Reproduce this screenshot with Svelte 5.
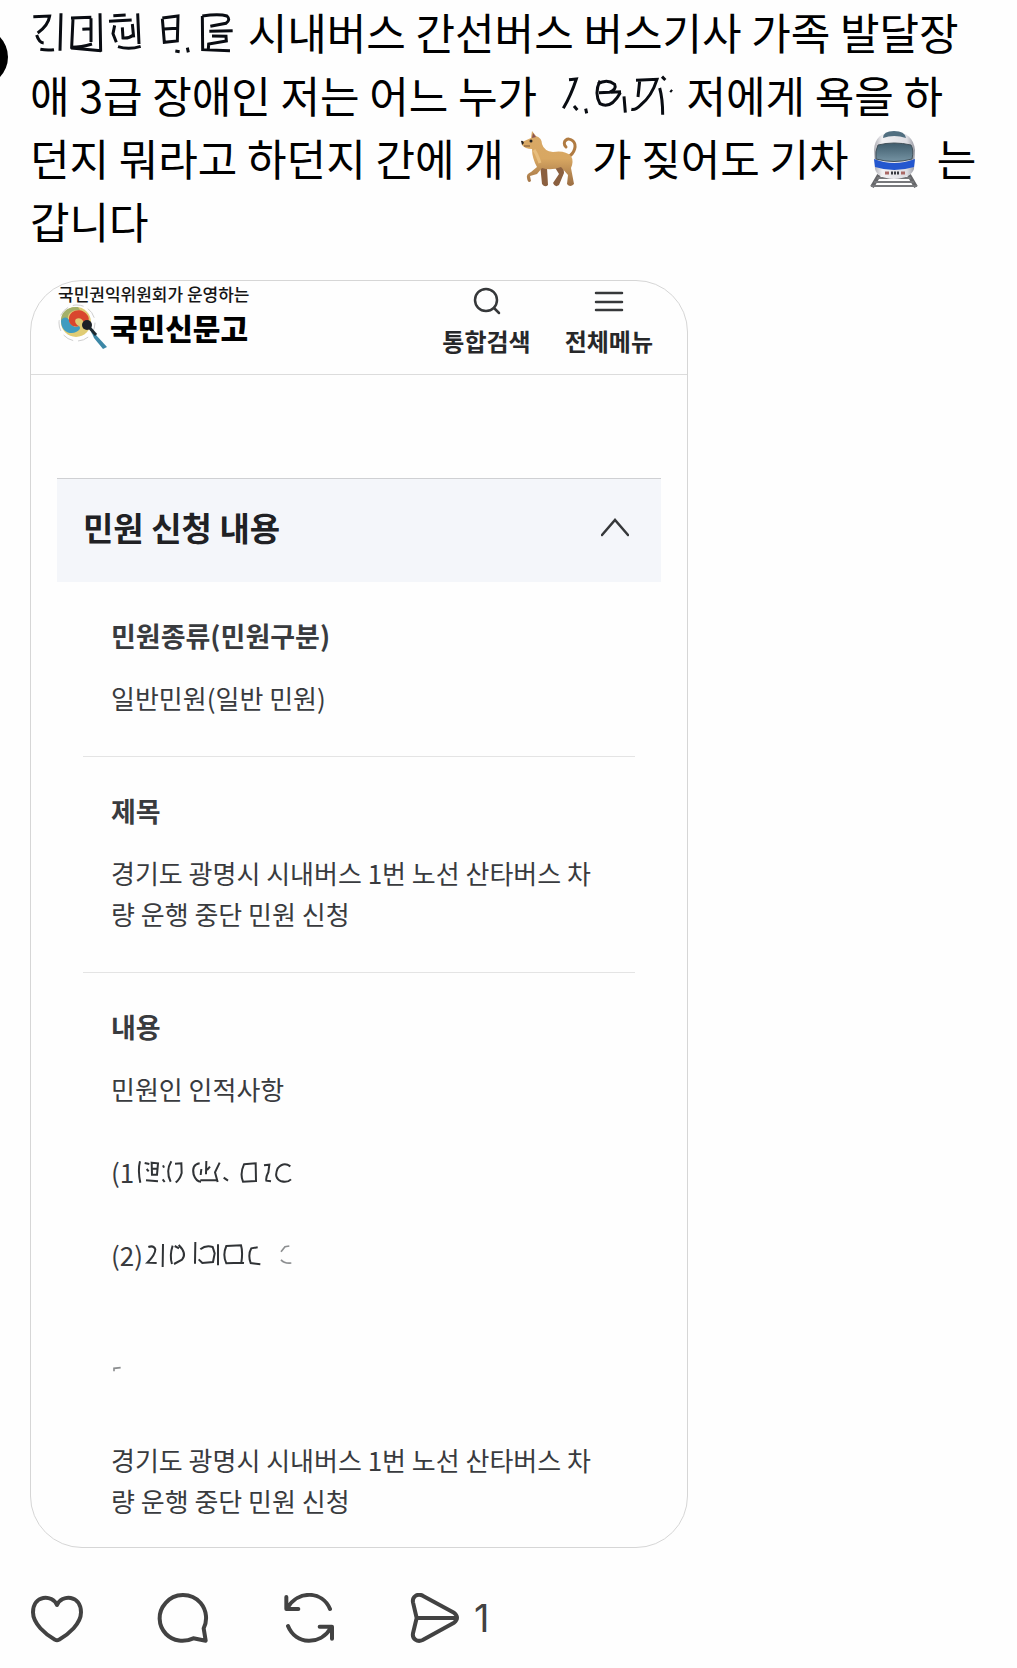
<script lang="ts">
  let liked = $state(false);
  let open = $state(true);

  const summary = ['경기도 광명시 시내버스 1번 노선 산타버스 차', '량 운행 중단 민원 신청'];
</script>

<main class="post">
  <div class="avatar-edge"></div>

  <p class="post-text">
    <span class="line"><svg class="smudge" width="208" height="63" viewBox="93 0 624 189" aria-hidden="true">
        <path d="M103 50 L152 48 Q148 76 116 99 M113 105 Q120 128 134 129 M124 148 Q145 152 165 149 M186 40 L183 152" />
        <path d="M216 54 L277 52 M222 56 L218 142 Q246 142 279 132 M276 55 L276 126 M250 88 L278 86 M303 40 L305 155 M216 144 L306 152" />
        <path d="M343 47 L380 45 M330 64 L398 60 M347 76 L342 101 L352 127 M370 82 L372 114 Q390 116 403 105 M400 72 L404 112 M416 40 L420 132 M357 140 Q390 150 425 139" />
        <path d="M490 54 L537 48 L535 123 L496 127 L490 56 M495 87 L533 85 M529 153 L542 155 M565 143 L568 157" />
        <path d="M610 48 L611 149 L693 152 M610 48 Q660 40 684 48 Q696 59 681 70 Q655 75 634 79 M631 94 L701 92 M639 108 L681 109 L682 123 L629 132 L628 147" />
      </svg> 시내버스 간선버스 버스기사 가족 발달장</span>
    <span class="line">애 3급 장애인 저는 어느 누가 <svg class="smudge inset" width="122" height="63" viewBox="168 189 366 189" aria-hidden="true">
        <path d="M210 239 L232 237 Q216 286 193 325 M225 318 L235 330 M260 326 L263 340" />
        <path d="M296 252 Q324 235 347 253 Q354 268 331 277 L300 278 M303 242 Q285 280 303 311 Q335 329 364 278 M335 277 L366 275 M375 289 L379 338" />
        <path d="M411 241 L474 238 Q458 289 425 315 Q410 331 397 328 M422 243 L417 291 M482 264 Q491 296 491 344 M489 230 L499 240 M514 271 L519 275" />
      </svg> 저에게 욕을 하</span>
    <span class="line">던지 뭐라고 하던지 간에 개 <svg class="emoji" width="58" height="58" viewBox="0 0 58 58" role="img" aria-label="개">
        <defs>
          <linearGradient id="fur" x1="0" y1="0" x2="0" y2="1">
            <stop offset="0" stop-color="#d9a967" />
            <stop offset="0.5" stop-color="#d8a762" />
            <stop offset="1" stop-color="#9a6d43" />
          </linearGradient>
        </defs>
        <path d="M48 27 C55 23 57 15 53 11 C48 6 41 12 46 17" fill="none" stroke="#b07b42" stroke-width="3" stroke-linecap="round" />
        <path d="M20 34 L22 54 Q25 58 28 55 L27 38 Z M34 36 L39 44 L33 53 Q35 58 39 55 L44 43 L43 32 Z" fill="#8b6040" />
        <path d="M11 8 L12 1 L16 6 Q22 8 22 14 Q24 21 33 22 Q45 20 51 26 Q54 31 51 38 L54 54 Q50 58 47 54 L48 45 L41 37 Q31 41 22 38 L17 44 L10 46 L11 51 Q8 54 7 48 Q6 44 11 42 L17 37 Q12 28 12 19 Q5 19 2 15 L2 12 Z" fill="url(#fur)" />
        <path d="M12 8 L13 3 L16 7 Z" fill="#8b5552" />
        <path d="M1 11 Q3 10 4 13 L2 15 Z" fill="#282321" />
        <circle cx="11" cy="11" r="1.5" fill="#282321" />
        <path d="M4 16 L10 16" stroke="#795234" />
        <path d="M14 20 Q17 24 20 33" fill="none" stroke="#e7bd7d" stroke-width="3" />
      </svg> 가 짖어도 기차 <svg class="emoji" width="58" height="58" viewBox="0 0 58 58" role="img" aria-label="기차">
        <defs>
          <linearGradient id="glass" x1="0" y1="0" x2="0" y2="1">
            <stop offset="0" stop-color="#3f5c6c" />
            <stop offset="1" stop-color="#7593a3" />
          </linearGradient>
          <linearGradient id="shell" x1="0" y1="0" x2="1" y2="0">
            <stop offset="0" stop-color="#adadb4" />
            <stop offset="0.2" stop-color="#f2f1f3" />
            <stop offset="0.8" stop-color="#dedee3" />
            <stop offset="1" stop-color="#9698a1" />
          </linearGradient>
        </defs>
        <path d="M14 45 L7 57 M44 45 L51 57" stroke="#66676a" stroke-width="4" />
        <path d="M12 48 H46 M9 52 H49 M6 56 H52" stroke="#77787b" stroke-width="2" />
        <path d="M9 20 Q10 2 29 2 Q48 2 50 20 L49 39 Q46 48 29 49 Q12 48 10 39 Z" fill="url(#shell)" />
        <path d="M18 8 Q18 1 29 1 Q40 1 41 8 Q29 4 18 8 Z" fill="#516f80" />
        <path d="M9 29 Q29 37 50 29 L49 37 Q29 43 10 37 Z" fill="#2457cf" />
        <path d="M13 15 Q29 11 46 15 Q49 20 47 29 Q29 34 11 29 Q10 21 13 15 Z" fill="url(#glass)" stroke="#42515a" />
        <path d="M20 43 H24 M36 43 H40" stroke="#aa6865" stroke-width="3" />
        <path d="M26 43 H34" stroke="#393a40" stroke-width="3" stroke-dasharray="2 1" />
      </svg> 는</span>
    <span class="line">갑니다</span>
  </p>

  <article class="card">
    <header class="card-header">
      <div class="brand">
        <div class="tagline">국민권익위원회가 운영하는</div>
        <div class="brand-row">
          <svg width="50" height="46" viewBox="0 0 50 46" aria-hidden="true">
            <circle cx="19" cy="19" r="18" fill="none" stroke="#cfcfcf" stroke-dasharray="11 5" />
            <circle cx="18" cy="18" r="15" fill="#e0cc74" />
            <path d="M20 3 C9 2 2 9 3 18 C8 21 10 16 10 12 C12 7 16 6 22 6 Z" fill="#a3b06a" />
            <path d="M3 17 C3 28 13 31 18 28 C22 26 23 24 21 22 C17 24 12 22 11 16 C9 12 4 13 3 17 Z" fill="#3f9cc0" />
            <path d="M11 14 C12 5 25 3 30 12 C32 16 30 19 26 19 C25 15 21 13 18 15 C16 17 18 21 21 22 C15 24 10 20 11 14 Z" fill="#d9472e" />
            <path d="M32 25 L38 31 L49 43 L45 45 L36 34 Z" fill="#3c87a6" />
            <path d="M30 22 L38 31" stroke="#1d2930" stroke-width="3" />
            <circle cx="29" cy="21" r="5" fill="#1b2026" />
          </svg>
          <strong class="wordmark">국민신문고</strong>
        </div>
      </div>
      <nav class="header-actions">
        <button class="header-button">
          <svg width="32" height="32" viewBox="0 0 32 32" aria-hidden="true">
            <circle cx="15" cy="15" r="11" />
            <path d="M23 23 L28 28" />
          </svg>
          통합검색
        </button>
        <button class="header-button">
          <svg width="32" height="32" viewBox="0 0 32 32" aria-hidden="true">
            <path d="M3 8 H29 M3 17 H29 M3 25 H29" />
          </svg>
          전체메뉴
        </button>
      </nav>
    </header>

    <section class="complaint">
      <button class="accordion" aria-expanded={open} onclick={() => (open = !open)}>
        민원 신청 내용
        <svg class="chevron" class:closed={!open} width="28" height="20" viewBox="0 0 28 20" aria-hidden="true">
          <path d="M1 18 L14 3 L27 18" />
        </svg>
      </button>

      {#if open}
        <div class="details">
          <section class="item">
            <h3>민원종류(민원구분)</h3>
            <p>일반민원(일반 민원)</p>
          </section>
          <section class="item">
            <h3>제목</h3>
            <p>
              {#each summary as row}<span class="row">{row}</span>{/each}
            </p>
          </section>
          <section class="item">
            <h3>내용</h3>
            <p>민원인 인적사항</p>
            <p class="entry">(1<svg class="smudge small" width="161" height="41" viewBox="101 37 483 123" aria-hidden="true">
                <path d="M119 68 Q112 95 120 132 M133 73 L147 76 M139 91 L145 98 M137 125 L173 128 M154 72 L173 74 L170 108 L155 108 Z M156 90 L170 90 M188 80 L191 87 M187 122 L193 130" />
                <path d="M213 68 Q195 98 211 129 M224 75 L243 74 L244 103 Q238 124 226 131 M298 74 Q273 78 280 108 Q287 129 302 129 M303 91 L301 109 M318 67 L317 107 M320 94 L329 84 M300 125 L350 124 M358 72 L344 101 L352 130 M370 117 L383 126" />
                <path d="M431 77 L466 74 L467 127 L428 129 Q418 105 431 77 Z M491 80 L507 78 L504 101 Q496 116 498 126 L512 128 M570 83 Q550 68 532 89 Q519 119 543 128 Q561 133 572 122" />
              </svg></p>
            <p class="entry">(2)<svg class="smudge small" width="154" height="41" viewBox="126 287 462 123" aria-hidden="true">
                <path d="M142 326 Q158 320 163 333 Q163 350 139 373 L167 374 M186 317 L185 386 M215 322 Q205 352 213 377 M221 323 L234 330 M233 320 Q259 346 243 364 L219 377" />
                <path d="M283 311 L282 376 M298 333 Q315 319 335 326 L341 345 L336 371 L304 374 L293 363 M351 318 L351 381 M376 323 L420 321 Q426 340 421 373 L376 375 Q364 350 376 323 Z M421 373 L429 374 M470 327 L451 330 Q440 349 449 374 L478 378" />
                <path class="faint" d="M565 323 L552 325 L540 340 M540 364 Q549 376 571 374" />
              </svg></p>
            <p class="entry erased"><svg class="smudge small" width="12" height="41" viewBox="33 657 36 123" aria-hidden="true">
                <path class="faint" d="M42 697 V688 L62 686" />
              </svg></p>
            <p class="entry last">
              {#each summary as row}<span class="row">{row}</span>{/each}
            </p>
          </section>
        </div>
      {/if}
    </section>
  </article>

  <div class="post-actions">
    <button class="icon-button" aria-label="좋아요" aria-pressed={liked} onclick={() => (liked = !liked)}>
      <svg width="54" height="50" viewBox="30 456 162 150">
        <path d="M111 492 C97 459 39 461 39 514 C39 548 76 580 105 596 Q111 600 117 596 C146 580 183 548 183 514 C183 461 125 459 111 492 Z" />
      </svg>
    </button>
    <button class="icon-button" aria-label="댓글">
      <svg width="54" height="50" viewBox="408 456 162 150">
        <path d="M551 562 C563 538 560 508 542 486 C514 454 463 454 436 487 C412 514 414 554 438 579 C460 601 492 605 520 592 L557 599 Z" />
      </svg>
    </button>
    <button class="icon-button" aria-label="리포스트">
      <svg width="54" height="50" viewBox="786 456 162 150">
        <path d="M930 504 C907 449 835 447 802 501 M799 468 V504 H835 M804 555 C827 612 901 614 933 560 M899 557 H936 V593" />
      </svg>
    </button>
    <div class="share">
      <button class="icon-button" aria-label="보내기">
        <svg width="54" height="50" viewBox="1164 456 162 150">
          <path d="M1208 464 L1302 515 Q1320 530 1302 545 L1208 597 C1191 605 1176 592 1179 577 L1190 531 L1179 484 C1176 468 1191 456 1208 464 Z M1190 531 H1307" />
        </svg>
      </button>
      <span class="count">1</span>
    </div>
  </div>
</main>

<style>
  :global(body) {
    margin: 0;
    background: #fefefe;
  }

  .post {
    position: relative;
    overflow: hidden;
    padding: 0 30px 25px;
    font-family: 'Noto Sans CJK KR', 'Noto Sans', sans-serif;
    color: #000;
  }

  .avatar-edge {
    position: absolute;
    top: 28px;
    left: -50px;
    width: 58px;
    height: 58px;
    border-radius: 50%;
    background: #000;
  }

  .post-text {
    margin: 0;
    font-size: 43px;
    line-height: 63px;
  }

  .line {
    display: block;
    height: 63px;
    white-space: nowrap;
  }

  .smudge {
    vertical-align: top;
    fill: none;
    stroke: #090c12;
    stroke-width: 9;
  }

  .smudge.inset {
    margin-left: 8px;
  }

  .smudge.small {
    stroke: #303336;
    stroke-width: 6;
  }

  .smudge .faint {
    stroke: #8c8e90;
    stroke-width: 5;
  }

  .emoji {
    margin: 0 4px 0 7px;
    vertical-align: -12px;
  }

  .card {
    box-sizing: border-box;
    max-width: 658px;
    margin-top: 28px;
    border: 1px solid #d6d6d6;
    border-radius: 52px;
    overflow: hidden;
  }

  .card-header {
    display: flex;
    justify-content: space-between;
    align-items: flex-start;
    box-sizing: border-box;
    min-height: 94px;
    padding: 3px 34px 0 27px;
    border-bottom: 1px solid #dcdcdc;
  }

  .tagline {
    font-size: 17px;
    font-weight: 500;
    line-height: 20px;
    color: #151515;
  }

  .brand-row {
    display: flex;
    align-items: center;
    gap: 2px;
  }

  .wordmark {
    font-size: 30px;
    font-weight: 900;
    line-height: 40px;
  }

  .header-actions {
    display: flex;
    gap: 34px;
    padding-top: 1px;
  }

  button {
    padding: 0;
    border: 0;
    background: none;
    font-family: inherit;
    cursor: pointer;
  }

  .header-button {
    display: flex;
    flex-direction: column;
    align-items: center;
    gap: 8px;
    font-size: 24px;
    font-weight: 700;
    line-height: 32px;
    color: #27282a;
  }

  .header-button svg,
  .chevron {
    fill: none;
    stroke: #36383a;
    stroke-width: 2.5;
    stroke-linecap: round;
  }

  .complaint {
    margin: 103px 26px 0;
  }

  .accordion {
    display: flex;
    justify-content: space-between;
    align-items: center;
    box-sizing: border-box;
    width: 100%;
    height: 104px;
    padding: 0 32px 8px 26px;
    border-top: 1px solid #cfd0d3;
    background: #f4f6fa;
    font-size: 33px;
    font-weight: 700;
    color: #202124;
  }

  .chevron.closed {
    transform: rotate(180deg);
  }

  .details {
    margin: 0 26px;
  }

  .item {
    padding: 34px 28px 37px;
    border-bottom: 1px solid #e4e4e4;
    color: #393b3e;
  }

  .item:last-child {
    padding-bottom: 26px;
    border-bottom: 0;
  }

  .item h3 {
    margin: 0 0 21px;
    font-size: 27px;
    font-weight: 700;
    line-height: 40px;
  }

  .item p {
    margin: 0;
    font-size: 26px;
    line-height: 41px;
    white-space: nowrap;
  }

  .item:not(:last-child) {
    padding-bottom: 38px;
  }

  .row {
    display: block;
  }

  .item .entry {
    height: 41px;
    margin-top: 42px;
  }

  .item .erased {
    margin-top: 83px;
  }

  .item .last {
    height: auto;
    margin-top: 40px;
  }

  .post-actions {
    display: flex;
    align-items: center;
    gap: 72px;
    margin-top: 45px;
  }

  .icon-button svg {
    display: block;
    fill: none;
    stroke: #424242;
    stroke-width: 12;
    stroke-linecap: round;
    stroke-linejoin: round;
  }

  .share {
    display: flex;
    align-items: center;
    gap: 12px;
  }

  .count {
    font-family: Inter, sans-serif;
    font-size: 38px;
    line-height: 50px;
    color: #424242;
  }
</style>
